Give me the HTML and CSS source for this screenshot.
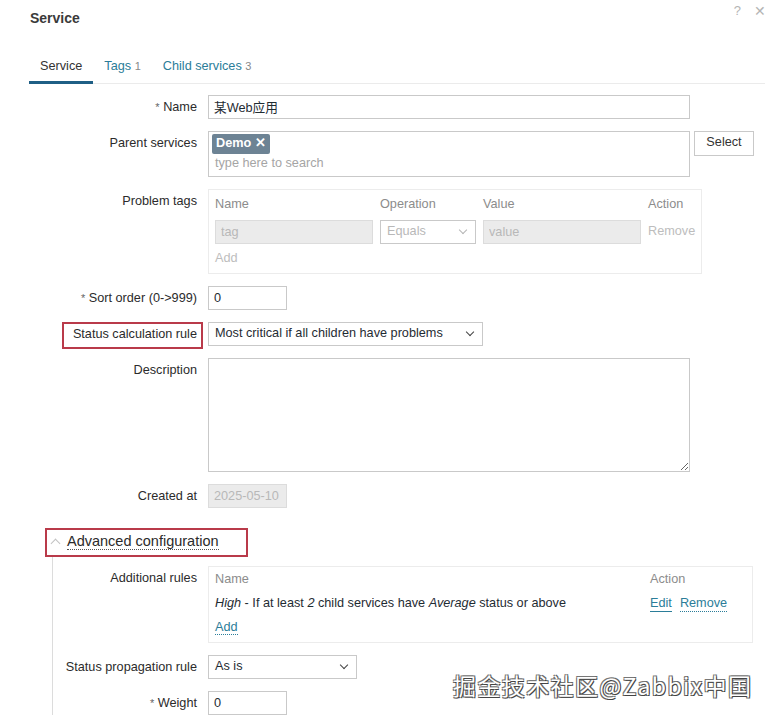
FILE: index.html
```html
<!DOCTYPE html>
<html lang="en">

<head>
    <meta charset="UTF-8">
    <meta name="viewport" content="width=device-width, initial-scale=1.0">
    <title>Service</title>
    <link rel="stylesheet" href="styles.css">
</head>

<body>
    <!-- 대화상자 -->
    <div class="dialog">
        <div class="head">
            <h1>Service</h1>
            <div class="head-btns">
                <span class="help">?</span>
                <span class="close">✕</span>
            </div>
        </div>

        <!-- 탭 -->
        <ul class="tabs">
            <li class="on">Service</li>
            <li><a href="#">Tags</a> <sup>1</sup></li>
            <li><a href="#">Child services</a> <sup>3</sup></li>
        </ul>

        <!-- 폼 -->
        <div class="form">
            <div class="row">
                <label><span class="req">*</span> Name</label>
                <div class="field"><input class="txt w-full" type="text" value="某Web应用"></div>
            </div>

            <div class="row">
                <label>Parent services</label>
                <div class="field flex">
                    <div class="multi">
                        <span class="chip">Demo <b>✕</b></span>
                        <span class="ph">type here to search</span>
                    </div>
                    <button class="btn">Select</button>
                </div>
            </div>

            <div class="row">
                <label class="pt">Problem tags</label>
                <div class="field">
                    <div class="tbl tags">
                        <div class="th">Name</div>
                        <div class="th">Operation</div>
                        <div class="th">Value</div>
                        <div class="th">Action</div>
                        <input class="txt dis" type="text" placeholder="tag">
                        <div class="sel dis">Equals <i class="chev"></i></div>
                        <input class="txt dis" type="text" placeholder="value">
                        <span class="muted">Remove</span>
                        <span class="muted add">Add</span>
                    </div>
                </div>
            </div>

            <div class="row">
                <label><span class="req">*</span> Sort order (0-&gt;999)</label>
                <div class="field"><input class="txt w-s" type="text" value="0"></div>
            </div>

            <div class="row">
                <label class="p0"><span class="mark">Status calculation rule</span></label>
                <div class="field">
                    <div class="sel w-l">Most critical if all children have problems <i class="chev"></i></div>
                </div>
            </div>

            <div class="row">
                <label>Description</label>
                <div class="field"><textarea class="area"></textarea></div>
            </div>

            <div class="row">
                <label>Created at</label>
                <div class="field"><input class="txt w-s dis" type="text" value="2025-05-10"></div>
            </div>
        </div>

        <!-- 고급설정 -->
        <div class="adv">
            <div class="adv-head">
                <span class="toggle"><i class="up"></i><a href="#">Advanced configuration</a></span>
            </div>
            <div class="adv-body">
                <div class="row">
                    <label>Additional rules</label>
                    <div class="field">
                        <div class="tbl rules">
                            <div class="th">Name</div>
                            <div class="th">Action</div>
                            <div><i>High</i> - If at least <i>2</i> child services have <i>Average</i> status or above</div>
                            <div class="acts"><a href="#" class="solid">Edit</a><a href="#">Remove</a></div>
                            <div><a href="#">Add</a></div>
                        </div>
                    </div>
                </div>

                <div class="row">
                    <label>Status propagation rule</label>
                    <div class="field">
                        <div class="sel w-m">As is <i class="chev"></i></div>
                    </div>
                </div>

                <div class="row">
                    <label><span class="req">*</span> Weight</label>
                    <div class="field"><input class="txt w-s" type="text" value="0"></div>
                </div>
            </div>
        </div>
    </div>

    <!-- 워터마크 -->
    <div class="wm">掘金技术社区@Zabbix中国</div>
</body>

</html>
```

FILE: styles.css
```css
html,
body {
    margin: 0;
    padding: 0;
    background: #fff;
}

body {
    font: 12.7px/1.25 "Liberation Sans", Arial, "Noto Sans CJK SC", sans-serif;
    color: #1f2c33;
    height: 719px;
    overflow: hidden;
}

a {
    color: #2b7d99;
    text-decoration: none;
}

/* 대화상자 */
.dialog {
    padding: 0 9px 0 30px;
}

.head {
    display: flex;
    justify-content: space-between;
    align-items: flex-start;
    height: 50px;
}

.head h1 {
    margin: 10px 0 0;
    font-size: 14px;
    font-weight: bold;
    color: #3a3a3a;
}

.head-btns {
    display: flex;
    gap: 13px;
    margin: 3px -1px 0 0;
    color: #b5b5b5;
    font-size: 13px;
}

.close {
    font-size: 14px;
}

/* 탭 */
.tabs {
    display: flex;
    margin: 0 0 11px -1px;
    padding: 0;
    list-style: none;
    border-bottom: 1px solid #ebebeb;
}

.tabs li {
    padding: 9px 11px 6px;
    font-size: 12.7px;
    border-bottom: 3px solid transparent;
    margin-bottom: -1px;
}

.tabs li.on {
    border-bottom-color: #1f5f85;
    color: #333;
}

.tabs sup {
    font-size: 11px;
    color: #888;
    vertical-align: 0;
}

/* 폼 행 */
.row {
    display: grid;
    grid-template-columns: 167px 1fr;
    column-gap: 11px;
    margin-bottom: 12px;
}

.row label {
    text-align: right;
    padding-top: 5px;
    color: #2b2b2b;
}

.row label.p0 {
    padding-top: 0;
}

.req {
    color: #666;
    font-size: 11px;
}

.field.flex {
    display: flex;
    align-items: flex-start;
    gap: 4px;
}

.txt {
    box-sizing: border-box;
    height: 24px;
    border: 1px solid #c9c9c9;
    padding: 0 5px;
    font: inherit;
    color: #1f2c33;
    background: #fff;
}

.w-full {
    width: 482px;
}

.w-s {
    width: 79px;
}

.dis {
    background: #ebebeb;
    border-color: #dcdcdc;
    color: #b8b8b8;
}

.dis::placeholder {
    color: #b8b8b8;
}

/* 멀티선택 */
.multi {
    box-sizing: border-box;
    width: 482px;
    height: 46px;
    border: 1px solid #c9c9c9;
    padding: 2px 3px;
    display: flex;
    flex-direction: column;
    align-items: flex-start;
    gap: 2px;
}

.chip {
    background: #6d8394;
    color: #fff;
    font-weight: bold;
    padding: 2px 4px;
    border-radius: 2px;
}

.ph {
    color: #a5a5a5;
    padding-left: 3px;
}

.btn {
    height: 25px;
    width: 60px;
    border: 1px solid #c9c9c9;
    background: #fff;
    font: inherit;
    color: #333;
}

/* 셀렉트 */
.sel {
    box-sizing: border-box;
    height: 24px;
    border: 1px solid #c9c9c9;
    padding: 0 6px;
    display: flex;
    align-items: center;
    justify-content: space-between;
    background: #fff;
}

.w-l {
    width: 275px;
}

.w-m {
    width: 149px;
}

.chev {
    width: 5px;
    height: 5px;
    border-right: 1.5px solid #444;
    border-bottom: 1.5px solid #444;
    transform: rotate(45deg);
    margin: -4px 3px 0 0;
}

.sel.dis .chev {
    border-color: #b5b5b5;
}

/* 표 */
.tbl {
    box-sizing: border-box;
    border: 1px solid #ececec;
    padding: 7px 6px 6px;
    display: grid;
    align-items: center;
}

.tbl .th {
    color: #8c8c8c;
}

.tags {
    width: 494px;
    grid-template-columns: 158px 96px 158px 1fr;
    column-gap: 7px;
    row-gap: 9px;
}

.tags .th {
    margin-bottom: -2px;
}

.muted {
    color: #bdbdbd;
}

.add {
    grid-column: 1;
    margin-top: -2px;
}

.rules {
    width: 545px;
    grid-template-columns: 1fr 96px;
    row-gap: 8px;
    padding: 5px 6px 6px;
}

.rules a {
    border-bottom: 1px dotted #2b7d99;
}

.rules a.solid {
    border-bottom-style: solid;
}

.acts {
    display: flex;
    gap: 8px;
}

.area {
    display: block;
    box-sizing: border-box;
    width: 482px;
    height: 114px;
    border: 1px solid #c9c9c9;
    resize: both;
}

/* 빨간 강조 박스 */
.mark {
    display: inline-block;
    border: 2px solid #b93a4a;
    padding: 3px 4px 4px 9px;
    margin: 0 -6px -4px 0;
}

/* 고급설정 */
.adv {
    margin-top: 20px;
}

.adv-head {
    margin-left: 15px;
}

.toggle {
    display: inline-flex;
    align-items: center;
    border: 2px solid #b93a4a;
    padding: 3px 27px 5px 3px;
    font-size: 14.5px;
}

.toggle a {
    color: #2b2b2b;
    border-bottom: 1px dotted #555;
    line-height: 16px;
}

.up {
    width: 6px;
    height: 6px;
    border-left: 1.5px solid #c2c2c2;
    border-top: 1.5px solid #c2c2c2;
    transform: rotate(45deg);
    margin: 4px 8px 0 2px;
}

.adv-body {
    margin: 0 0 0 22px;
    padding-top: 9px;
    border-left: 1px solid #dcdcdc;
}

.adv-body .row {
    grid-template-columns: 144px 1fr;
}

/* 워터마크 */
.wm {
    position: absolute;
    left: 453px;
    top: 668px;
    font: 23px "Noto Sans CJK SC", sans-serif;
    color: #fff;
    letter-spacing: 1.4px;
    text-shadow: 1px 1px 0 #444, -1px -1px 0 #777, 1px -1px 0 #666, -1px 1px 0 #666;
}
```
